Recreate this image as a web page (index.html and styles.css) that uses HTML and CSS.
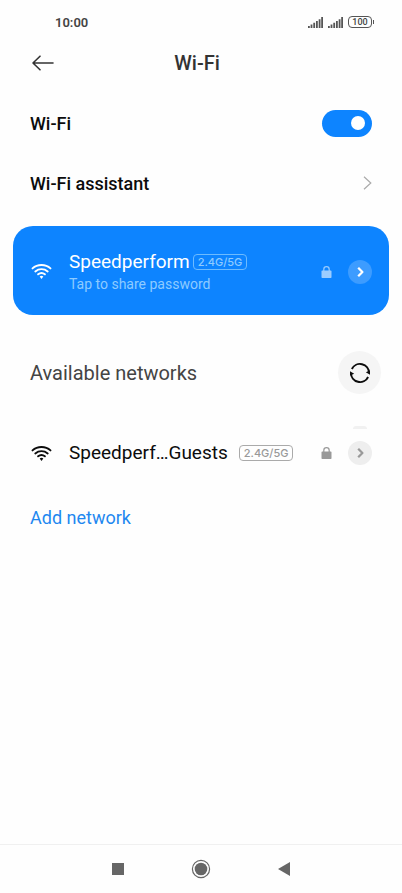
FILE: index.html
```html
<!DOCTYPE html>
<html lang="en">
<head>
<meta charset="utf-8">
<meta name="viewport" content="width=device-width, initial-scale=1">
<title>Wi-Fi</title>
<link rel="stylesheet" href="styles.css">
</head>
<body>
<svg class="defs" aria-hidden="true">
  <symbol id="wifi" viewBox="0 0 20 15">
    <g fill="none" stroke="currentColor" stroke-width="1.9" stroke-linecap="round">
      <path d="M1 4.4C6-.2 14-.2 19 4.4"/>
      <path d="M3.8 7.4c3.6-3 8.8-3 12.4 0"/>
      <path d="M6.6 10.3c2.1-1.7 4.7-1.7 6.8 0"/>
    </g>
    <path d="M8.2 12.5c1.1-.9 2.5-.9 3.6 0L10 14.9Z" fill="currentColor"/>
  </symbol>
  <symbol id="lock" viewBox="0 0 10 12">
    <rect x="0" y="4.6" width="10" height="7.4" rx=".8" fill="currentColor"/>
    <path d="M2.3 5V3.4a2.7 2.7 0 0 1 5.4 0V5" fill="none" stroke="currentColor" stroke-width="1.2"/>
  </symbol>
  <symbol id="more" viewBox="0 0 24 24">
    <path d="M10.2 7.8 14.4 12l-4.2 4.2" fill="none" stroke="currentColor" stroke-width="2.3" stroke-linejoin="round"/>
  </symbol>
  <symbol id="signal" viewBox="0 0 15 11">
    <path d="M.9 11V9M3.5 11V7.6M6.2 11V5.8M8.9 11V4M11.6 11V2.2M14.1 11V0" fill="none" stroke="currentColor" stroke-width="1.8"/>
  </symbol>
</svg>

<header>
  <div class="status">
    <time>10:00</time>
    <div class="status-icons">
      <svg class="signal"><use href="#signal"/></svg>
      <svg class="signal"><use href="#signal"/></svg>
      <span class="battery">100</span>
    </div>
  </div>
  <div class="titlebar">
    <button class="back" aria-label="Back">
      <svg viewBox="0 0 22 16"><path d="M21 8H1M8 1.2 1 8l7 6.8" fill="none" stroke="currentColor" stroke-width="1.6" stroke-linecap="round" stroke-linejoin="round"/></svg>
    </button>
    <h1>Wi-Fi</h1>
  </div>
</header>

<main>
  <div class="setting">
    <label for="wifi-on">Wi-Fi</label>
    <input class="switch" id="wifi-on" type="checkbox" role="switch" checked>
  </div>
  <a class="setting" href="#assistant">
    Wi-Fi assistant
    <svg class="chevron" viewBox="0 0 9 14"><path d="m1 .8 6.8 6.2L1 13.2" fill="none" stroke="currentColor" stroke-width="1.2"/></svg>
  </a>

  <section class="network connected">
    <svg class="wifi"><use href="#wifi"/></svg>
    <div class="info">
      <div class="name">Speedperform <span class="band">2.4G/5G</span></div>
      <div class="hint">Tap to share password</div>
    </div>
    <svg class="lock"><use href="#lock"/></svg>
    <button class="more" aria-label="Speedperform details"><svg><use href="#more"/></svg></button>
  </section>

  <div class="available">
    <h2>Available networks</h2>
    <button class="refresh" aria-label="Refresh">
      <svg viewBox="0 0 22 22">
        <g fill="none" stroke="currentColor" stroke-width="2">
          <path d="M2.9 7A9 9 0 0 1 20 11"/>
          <path d="M19.1 15A9 9 0 0 1 2 11"/>
        </g>
        <path d="M16.8 10.2 21 8.6V12.8ZM5.2 11.8 1 13.4V9.2Z" fill="currentColor"/>
      </svg>
    </button>
  </div>

  <div class="list">
    <div class="network">
      <svg class="wifi"><use href="#wifi"/></svg>
      <div class="info">
        <div class="name spaced">Speedperf…Guests <span class="band">2.4G/5G</span></div>
      </div>
      <svg class="lock"><use href="#lock"/></svg>
      <button class="more" aria-label="Guest network details"><svg><use href="#more"/></svg></button>
    </div>
  </div>
  <a class="add" href="#add">Add network</a>
</main>

<nav>
  <button aria-label="Recent apps"><svg viewBox="0 0 20 20"><rect x="4" y="4" width="12" height="12" fill="currentColor"/></svg></button>
  <button aria-label="Home"><svg viewBox="0 0 20 20"><circle cx="10" cy="10" r="8.6" fill="none" stroke="currentColor" stroke-width="1.2"/><circle cx="10" cy="10" r="6.3" fill="currentColor"/></svg></button>
  <button aria-label="Go back"><svg viewBox="0 0 20 20"><path d="M4 10 16 3v14Z" fill="currentColor"/></svg></button>
</nav>
</body>
</html>
```
FILE: styles.css
```css
* { box-sizing: border-box; }

body {
  margin: 0;
  min-height: 100vh;
  display: flex;
  flex-direction: column;
  background: #fefefe;
  color: #0c0c0c;
  font-family: Roboto, "Liberation Sans", sans-serif;
}

svg { display: block; flex: none; }
.defs { position: absolute; width: 0; height: 0; }
a { color: inherit; text-decoration: none; }
button {
  display: grid;
  place-items: center;
  padding: 0;
  border: 0;
  background: none;
  color: inherit;
}
h1, h2 { margin: 0; }

.status {
  display: flex;
  align-items: center;
  justify-content: space-between;
  height: 44px;
  padding: 0 30px 0 55px;
  color: #444;
  font-size: 13px;
  font-weight: 600;
}
.status-icons { display: flex; align-items: center; gap: 5px; }
.signal { width: 15px; height: 11px; color: #555; }
.battery {
  position: relative;
  width: 24px;
  height: 12px;
  border: 1px solid #555;
  border-radius: 4px;
  font-size: 9px;
  font-weight: 500;
  line-height: 11px;
  text-align: center;
}
.battery::after {
  content: "";
  position: absolute;
  top: 3px;
  right: -3px;
  width: 1px;
  height: 4px;
  background: #555;
}

.titlebar {
  display: grid;
  grid-template-columns: 1fr auto 1fr;
  align-items: center;
  height: 37px;
  padding: 0 40px 0 32px;
  color: #333;
}
.back { justify-self: start; }
.back svg { width: 22px; height: 16px; }
h1 { font-size: 20px; font-weight: 500; }

main { flex: 1; padding-top: 12px; }

.setting {
  display: flex;
  align-items: center;
  justify-content: space-between;
  height: 60px;
  padding: 0 30px;
  font-size: 18px;
  font-weight: 500;
}
.chevron { width: 9px; height: 14px; color: #aaa; }
.switch {
  appearance: none;
  display: flex;
  align-items: center;
  justify-content: flex-end;
  width: 50px;
  height: 27px;
  margin: 0;
  padding: 0 7px;
  border-radius: 14px;
  background: #0d84ff;
}
.switch::before {
  content: "";
  width: 14px;
  height: 14px;
  border-radius: 50%;
  background: #fff;
}
.switch:not(:checked) { justify-content: flex-start; background: #ccc; }

.network {
  display: flex;
  align-items: center;
  height: 52px;
  margin: 0 13px;
  padding: 0 17px 0 18px;
}
.wifi { width: 21px; height: 15px; margin-right: 17px; }
.info { flex: 1; }
.name {
  display: flex;
  align-items: center;
  gap: 3px;
  font-size: 19px;
  line-height: 24px;
}
.spaced { gap: 11px; }
.hint { color: #8ecbff; font-size: 14px; line-height: 20px; }
.band {
  padding: 0 4px;
  border: 1px solid #aaa;
  border-radius: 4px;
  color: #999;
  font-family: Inter, sans-serif;
  font-size: 11px;
  font-weight: 500;
  line-height: 14px;
}
.lock { width: 11px; height: 12px; margin-right: 16px; color: #999; }
.more {
  width: 24px;
  height: 24px;
  border-radius: 50%;
  background: #eee;
  color: #999;
}
.more svg { width: 24px; height: 24px; }

.connected {
  height: 89px;
  margin-top: 13px;
  padding-top: 2px;
  border-radius: 20px;
  background: #0d84ff;
  color: #fff;
}
.connected .band { border-color: #6dbbff; color: #8ecbff; }
.connected .lock { color: #9bccff; }
.connected .more { background: #3d9cff; color: #fff; }

.available {
  display: flex;
  align-items: center;
  justify-content: space-between;
  padding: 36px 21px 0 30px;
}
h2 { color: #444; font-size: 20px; font-weight: 400; }
.refresh {
  width: 43px;
  height: 43px;
  border-radius: 50%;
  background: #f5f5f5;
  color: #0c0c0c;
}
.refresh svg { width: 22px; height: 22px; }

.list { margin-top: 32px; }
.list::before {
  content: "";
  display: block;
  width: 14px;
  height: 3px;
  margin: 0 35px -2px auto;
  border-radius: 7px 7px 0 0;
  background: #f1f1f1;
}

.add {
  display: inline-block;
  margin: 27px 30px 0;
  color: #1e88f0;
  font-size: 18px;
  line-height: 24px;
}

nav {
  display: flex;
  align-items: center;
  justify-content: center;
  gap: 63px;
  height: 49px;
  border-top: 1px solid #f0f0f0;
  color: #666;
}
nav svg { width: 20px; height: 20px; }
```
